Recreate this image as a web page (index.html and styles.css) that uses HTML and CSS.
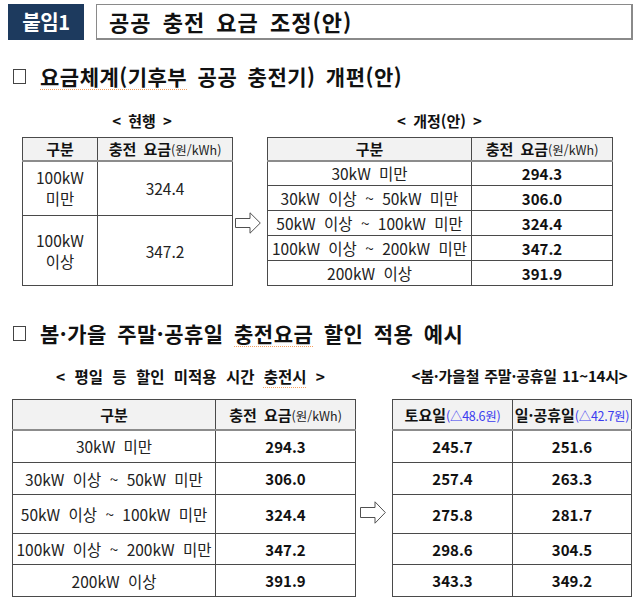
FILE: index.html
```html
<!DOCTYPE html>
<html lang="ko">
<head>
<meta charset="utf-8">
<title>공공 충전 요금 조정(안)</title>
<link rel="stylesheet" href="styles.css">
</head>
<body>
<div class="page">
  <div class="top">
    <div class="tag">붙임1</div>
    <div class="title-box">공공 충전 요금 조정(안)</div>
  </div>

  <div class="sec-head sec1">
    <span class="box"></span>
    <span class="sec-text"><span class="spell">요금체계(기후부</span> 공공 충전기) 개편(안)</span>
  </div>

  <div class="cmp cmp1">
    <div class="blk blk-cur">
      <div class="cap cap-cur">&lt; 현행 &gt;</div>
      <table class="tbl t-cur">
        <colgroup><col class="c-cur1"><col class="c-cur2"></colgroup>
        <thead>
          <tr><th class="hd">구분</th><th class="hd">충전 요금<span class="unit">(원/kWh)</span></th></tr>
        </thead>
        <tbody>
          <tr class="r-cur1"><td class="lbl lbl2"><div>100kW</div><div>미만</div></td><td class="val">324.4</td></tr>
          <tr class="r-cur2"><td class="lbl lbl2"><div>100kW</div><div>이상</div></td><td class="val">347.2</td></tr>
        </tbody>
      </table>
    </div>
    <svg class="arrow arrow1" viewBox="0 0 26 22" width="26" height="22">
      <polygon points="0.5,6.5 15,6.5 15,0.8 25.3,11 15,21.2 15,15.5 0.5,15.5" fill="#fff" stroke="#505050" stroke-width="1"/>
    </svg>
    <div class="blk blk-new">
      <div class="cap">&lt; 개정(안) &gt;</div>
      <table class="tbl t-new">
        <colgroup><col class="c-new1"><col class="c-new2"></colgroup>
        <thead>
          <tr><th class="hd">구분</th><th class="hd">충전 요금<span class="unit">(원/kWh)</span></th></tr>
        </thead>
        <tbody>
          <tr><td class="lbl">30kW 미만</td><td class="num">294.3</td></tr>
          <tr><td class="lbl">30kW 이상 ~ 50kW 미만</td><td class="num">306.0</td></tr>
          <tr><td class="lbl">50kW 이상 ~ 100kW 미만</td><td class="num">324.4</td></tr>
          <tr><td class="lbl">100kW 이상 ~ 200kW 미만</td><td class="num">347.2</td></tr>
          <tr><td class="lbl">200kW 이상</td><td class="num">391.9</td></tr>
        </tbody>
      </table>
    </div>
  </div>

  <div class="sec-head sec2">
    <span class="box"></span>
    <span class="sec-text">봄·가을 주말·공휴일 <span class="spell">충전요금</span> 할인 적용 예시</span>
  </div>

  <div class="cmp cmp2">
    <div class="blk blk-wk">
      <div class="cap cap-wk">&lt; 평일 등 할인 미적용 시간 <span class="spell">충전시</span> &gt;</div>
      <table class="tbl t-bot t-wk">
        <colgroup><col class="c-wk1"><col class="c-wk2"></colgroup>
        <thead>
          <tr><th class="hd">구분</th><th class="hd">충전 요금<span class="unit">(원/kWh)</span></th></tr>
        </thead>
        <tbody>
          <tr><td class="lbl">30kW 미만</td><td class="num">294.3</td></tr>
          <tr><td class="lbl">30kW 이상 ~ 50kW 미만</td><td class="num">306.0</td></tr>
          <tr><td class="lbl">50kW 이상 ~ 100kW 미만</td><td class="num">324.4</td></tr>
          <tr><td class="lbl">100kW 이상 ~ 200kW 미만</td><td class="num">347.2</td></tr>
          <tr><td class="lbl">200kW 이상</td><td class="num">391.9</td></tr>
        </tbody>
      </table>
    </div>
    <svg class="arrow arrow2" viewBox="0 0 26 23" width="26" height="23">
      <polygon points="0.5,6.5 15,6.5 15,0.8 25.3,11.5 15,22.2 15,16.5 0.5,16.5" fill="#fff" stroke="#505050" stroke-width="1"/>
    </svg>
    <div class="blk blk-sp">
      <div class="cap cap-sp">&lt;봄·가을철 주말·공휴일 11~14시&gt;</div>
      <table class="tbl t-bot t-sp">
        <colgroup><col class="c-sp1"><col class="c-sp2"></colgroup>
        <thead>
          <tr><th class="hd">토요일<span class="delta">(△48.6원)</span></th><th class="hd">일·공휴일<span class="delta">(△42.7원)</span></th></tr>
        </thead>
        <tbody>
          <tr><td class="num">245.7</td><td class="num">251.6</td></tr>
          <tr><td class="num">257.4</td><td class="num">263.3</td></tr>
          <tr><td class="num">275.8</td><td class="num">281.7</td></tr>
          <tr><td class="num">298.6</td><td class="num">304.5</td></tr>
          <tr><td class="num">343.3</td><td class="num">349.2</td></tr>
        </tbody>
      </table>
    </div>
  </div>
</div>
</body>
</html>
```

FILE: styles.css
```css
* { box-sizing: border-box; }

html, body {
  margin: 0;
  padding: 0;
  background: #fff;
}

body {
  font-family: "Noto Sans CJK KR", "Malgun Gothic", sans-serif;
  color: #111;
}

.page {
  width: 640px;
  height: 597px;
  overflow: hidden;
}

/* ---------- top title bar ---------- */
.top {
  display: flex;
  height: 36px;
  margin-top: 4px;
  padding-left: 8px;
}

.tag {
  width: 76px;
  height: 36px;
  background: #1d3a5e;
  color: #fff;
  font-weight: 700;
  font-size: 20px;
  line-height: 36px;
  text-align: center;
  letter-spacing: -0.3px;
}

.title-box {
  width: 537px;
  height: 36px;
  margin-left: 12px;
  border-top: 1px solid #8a8a8a;
  border-left: 1px solid #8a8a8a;
  border-right: 2px solid #8a8a8a;
  border-bottom: 2px solid #8a8a8a;
  font-weight: 700;
  font-size: 22px;
  line-height: 32px;
  padding-left: 12px;
  letter-spacing: 1px;
  word-spacing: 4px;
  color: #111;
}

/* ---------- section headings ---------- */
.sec-head {
  display: flex;
  align-items: center;
  height: 24px;
  padding-left: 13px;
}

.sec1 { margin-top: 24px; }
.sec2 { margin-top: 35px; }

.box {
  width: 13px;
  height: 15px;
  border: 1px solid #444;
  margin-right: 14px;
  flex: none;
}

.sec-text {
  font-weight: 700;
  font-size: 21px;
  line-height: 24px;
  letter-spacing: 0.5px;
  word-spacing: 4px;
  color: #111;
}

.spell {
  text-decoration: underline dotted #f4a060;
  text-decoration-thickness: 1px;
  text-underline-offset: 4px;
}

/* ---------- compare rows ---------- */
.cmp {
  display: flex;
  align-items: flex-start;
}

.cmp1 {
  margin-top: 20px;
  padding-left: 22px;
}

.cmp2 {
  margin-top: 18px;
  padding-left: 12px;
}

.cap {
  font-weight: 700;
  font-size: 15px;
  line-height: 26px;
  text-align: center;
  word-spacing: 3px;
  color: #111;
}

.blk-cur { width: 210px; }
.cap-cur { padding-left: 30px; }

.blk-new { width: 345px; margin-left: 6px; }

.blk-wk { width: 343px; }
.blk-sp { width: 239px; margin-left: 6px; }

.cmp1 .cap { margin-bottom: 3px; }
.cmp2 .cap { margin-bottom: 10px; }

.cap-wk { padding-left: 14px; word-spacing: 5px; font-size: 15.5px; }
.cap-sp { padding-left: 16px; word-spacing: 1px; letter-spacing: -0.2px; }

.arrow { flex: none; display: block; }
.arrow1 { margin-left: 3px; margin-top: 104px; }
.arrow2 { margin-left: 5px; margin-top: 138px; }

/* ---------- tables ---------- */
.tbl {
  border-collapse: collapse;
  table-layout: fixed;
  width: 100%;
  border: 1px solid #4a4a4a;
}

.tbl th,
.tbl td {
  border: 1px solid #4a4a4a;
  padding: 0;
  text-align: center;
  vertical-align: middle;
  white-space: nowrap;
}

.tbl thead th {
  background: #f2f2f2;
  border-bottom: 2px solid #8c8c8c;
}

.hd {
  font-weight: 700;
  font-size: 15px;
  word-spacing: 3px;
  color: #111;
}

.unit {
  font-weight: 400;
  font-size: 12.5px;
  word-spacing: 0;
  color: #222;
}

.delta {
  font-weight: 400;
  font-size: 12.5px;
  letter-spacing: -0.3px;
  color: #3b3bf0;
}

.lbl {
  font-size: 15.5px;
  line-height: 20px;
  word-spacing: 4px;
  color: #222;
}

.lbl2 div {
  line-height: 21px;
}

.val {
  font-size: 15.5px;
  color: #222;
}

.num {
  font-weight: 700;
  font-size: 15px;
  color: #111;
}

/* column widths */
.c-cur1 { width: 75px; }
.c-cur2 { width: 135px; }
.c-new1 { width: 204px; }
.c-new2 { width: 141px; }
.c-wk1 { width: 203px; }
.c-wk2 { width: 140px; }
.c-sp1 { width: 120px; }
.c-sp2 { width: 119px; }

/* row heights */
.t-cur thead tr,
.t-new thead tr { height: 23px; }
.r-cur1 { height: 55px; }
.r-cur2 { height: 70px; }
.t-new tbody tr { height: 25px; }

.t-bot thead tr { height: 30px; }
.t-bot tbody tr:nth-child(1) { height: 33px; }
.t-bot tbody tr:nth-child(2) { height: 32px; }
.t-bot tbody tr:nth-child(3) { height: 39px; }
.t-bot tbody tr:nth-child(4) { height: 31px; }
.t-bot tbody tr:nth-child(5) { height: 32px; }
```
